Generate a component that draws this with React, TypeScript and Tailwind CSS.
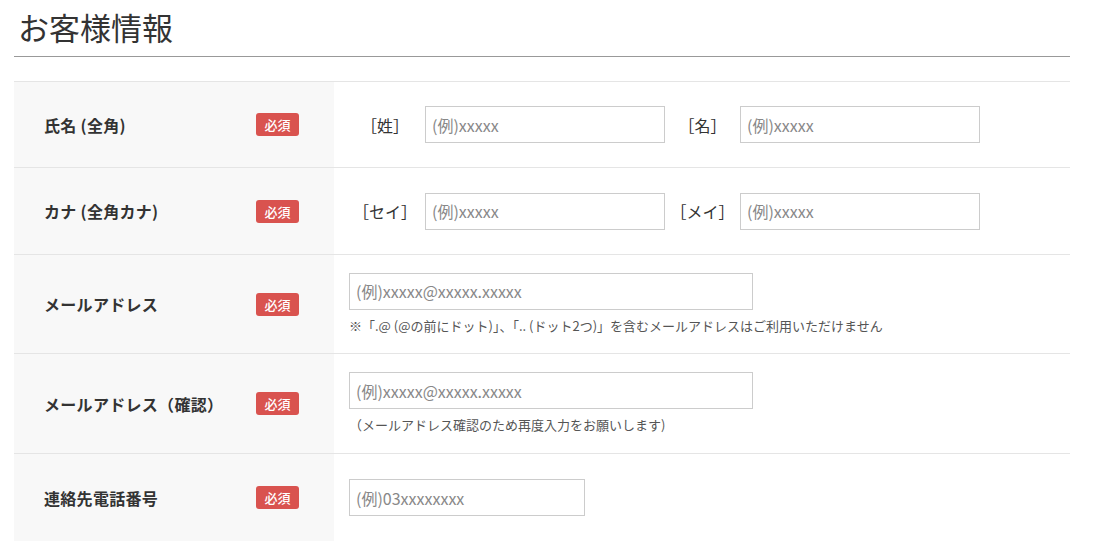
import * as React from "react"

const font = { fontFamily: '"Noto Sans CJK JP", "Noto Sans", sans-serif' }

const Badge = () => (
  <span className="inline-flex h-[23px] w-[43px] items-center justify-center rounded-[3px] bg-[#d9534f] text-[13px] font-medium leading-none text-white">
    必須
  </span>
)

const TextInput = ({ placeholder, className }: { placeholder: string; className: string }) => (
  <input
    type="text"
    placeholder={placeholder}
    className={"h-[37px] border border-[#cccccc] bg-white px-[6px] text-[16px] text-[#333] placeholder:text-[#888] focus:outline-none " + className}
    style={font}
  />
)

const Row = ({
  label,
  height,
  children,
}: {
  label: string
  height: string
  children: React.ReactNode
}) => (
  <div className={"flex border-t border-[#e5e5e5] " + height}>
    <div className="flex w-[320px] shrink-0 items-center justify-between bg-[#f8f8f8] pl-[30px] pr-[35px]">
      <span className="text-[16px] font-bold tracking-[0.3px] text-[#333]">{label}</span>
      <Badge />
    </div>
    <div className="flex flex-1 flex-col justify-center pl-[15px]">{children}</div>
  </div>
)

const Split = ({ a, b }: { a: string; b: string }) => (
  <div className="flex items-center">
    <span className="w-[76px] pr-[4px] text-center text-[16px] text-[#333]">{a}</span>
    <TextInput placeholder="(例)xxxxx" className="w-[240px]" />
    <span className="w-[75px] text-center text-[16px] text-[#333]">{b}</span>
    <TextInput placeholder="(例)xxxxx" className="w-[240px]" />
  </div>
)

export default function App() {
  return (
    <div className="h-[541px] overflow-hidden bg-white" style={font}>
      <div className="w-[1056px] ml-[14px]">
        <h2 className="border-b border-[#999] pb-[8px] pl-[4px] pt-[6px] text-[31px] font-normal leading-[42px] text-[#333]">
          お客様情報
        </h2>
        <div className="mt-[24px]">
          <Row label="氏名 (全角)" height="h-[86px]">
            <Split a="［姓］" b="［名］" />
          </Row>
          <Row label="カナ (全角カナ)" height="h-[87px]">
            <Split a="［セイ］" b="［メイ］" />
          </Row>
          <Row label="メールアドレス" height="h-[99px]">
            <TextInput placeholder="(例)xxxxx@xxxxx.xxxxx" className="w-[404px]" />
            <p className="mt-[6px] text-[13px] leading-[20px] text-[#555]">
              ※「.@ (@の前にドット)」、「.. (ドット2つ)」を含むメールアドレスはご利用いただけません
            </p>
          </Row>
          <Row label="メールアドレス（確認）" height="h-[100px]">
            <TextInput placeholder="(例)xxxxx@xxxxx.xxxxx" className="w-[404px]" />
            <p className="mt-[6px] text-[13px] leading-[20px] text-[#555]">
              （メールアドレス確認のため再度入力をお願いします)
            </p>
          </Row>
          <Row label="連絡先電話番号" height="h-[88px]">
            <TextInput placeholder="(例)03xxxxxxxx" className="w-[236px]" />
          </Row>
        </div>
      </div>
    </div>
  )
}
